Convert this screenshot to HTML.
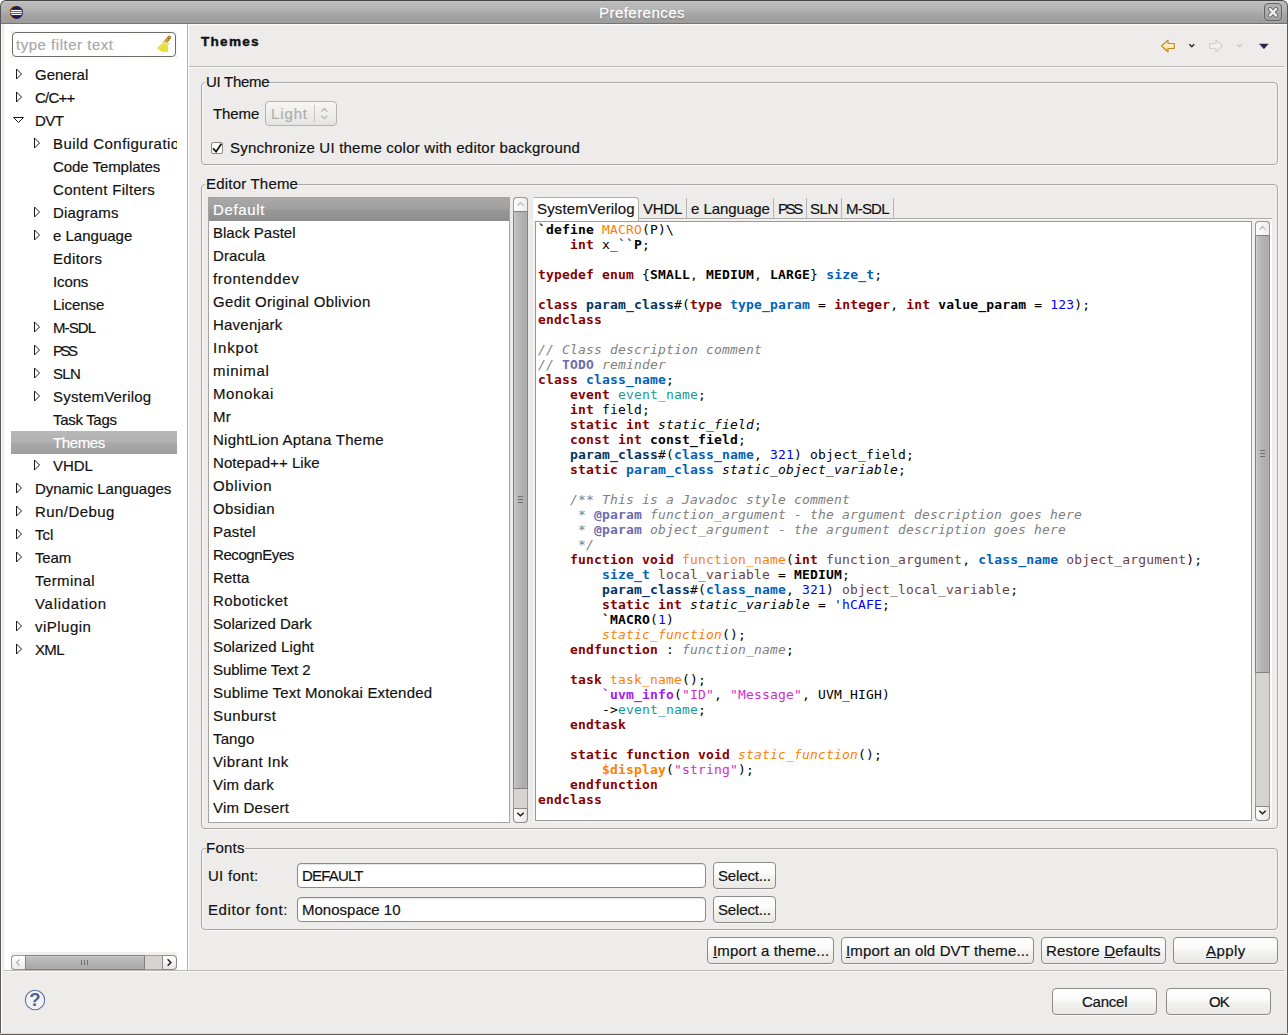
<!DOCTYPE html>
<html lang="en"><head><meta charset="utf-8"><title>Preferences</title>
<style>
*{box-sizing:border-box;margin:0;padding:0}
html,body{width:1288px;height:1035px;overflow:hidden;background:#edeceb}
body{position:relative;font-family:"Liberation Sans",sans-serif;font-size:15px;color:#111;-webkit-text-stroke:0.18px currentColor}
.a{position:absolute}
.t{position:absolute;white-space:pre}
#title{position:absolute;left:0;top:0;width:1288px;height:24px;border:1px solid #555;border-bottom-color:#747474;border-top-color:#444;border-radius:6px 6px 0 0;background:linear-gradient(#c6c6c6 0,#bababa 2px,#b4b4b4 8px,#a4a4a4 14px,#9c9c9c 100%)}
.sel{background:linear-gradient(#b8b8b8 0,#b2b2b2 45%,#a8a8a8 55%,#9e9e9e 100%)}
.self{background:linear-gradient(#a8a8a8 0,#a0a0a0 45%,#979797 55%,#8d8d8d 100%)}
.grp{position:absolute;border:1px solid #a9a7a4;border-radius:4px;box-shadow:inset 1px 1px 0 #f7f7f6,1px 1px 0 #f7f7f6}
.gl{position:absolute;background:#edeceb;height:4px}
.btn{position:absolute;border:1px solid #8d8b88;border-radius:4px;background:linear-gradient(#ffffff 0,#fbfbfb 40%,#f1f1f0 58%,#e9e8e7 100%);box-shadow:0 1px 0 #f6f6f5}
.inp{position:absolute;border:1px solid #8b8986;border-radius:4px;background:#fff;box-shadow:inset 0 1px 1px #e4e4e4}
u{text-decoration:underline;text-underline-offset:1px;text-decoration-thickness:1px}
#code{position:absolute;left:538px;top:222px;font-family:"DejaVu Sans Mono","Liberation Mono",monospace;font-size:13px;letter-spacing:0.174px;line-height:15px;color:#000;white-space:pre;-webkit-text-stroke:0}
#code div{height:15px}
.k{color:#860000;font-weight:bold}.b{font-weight:bold}.o{color:#ff8000}.oi{color:#ff8000;font-style:italic}.ob{color:#ff8000;font-weight:bold}
.tt{color:#0061ba;font-weight:bold}.n{color:#003366;font-weight:bold}.u{color:#0000ff}.c{color:#808080;font-style:italic}
.d{color:#6c6cae;font-weight:bold}.e{color:#149c9c}.i{font-style:italic}.l{color:#6a3e3e}.p{color:#a020f0;font-weight:bold}.s{color:#cd2ecd}
</style></head><body>
<div class="a" style="left:0px;top:0px;width:1288px;height:8px;background:#fff"></div>
<div class="a" style="left:0px;top:6px;width:1px;height:1029px;background:#5a5a5a"></div>
<div class="a" style="left:1287px;top:6px;width:1px;height:1029px;background:#5a5a5a"></div>
<div class="a" style="left:0px;top:1033px;width:1288px;height:1px;background:#d9d7d5"></div>
<div class="a" style="left:1px;top:24px;width:1px;height:1009px;background:#fbfbfb"></div>
<div class="a" style="left:0px;top:1034px;width:1288px;height:1px;background:#615d5a"></div>
<div id="title"></div>
<div class="t" style="left:599px;top:1px;height:24px;line-height:24px;letter-spacing:0.460px;color:#fff;-webkit-text-stroke:0.35px #fff;text-shadow:0 1px 1px #6a6a6a,0 0 1px #777;">Preferences</div>
<svg class="a" style="left:8px;top:4px" width="17" height="17" viewBox="0 0 17 17"><circle cx="7" cy="8.4" r="6.6" fill="#f7971d"/><circle cx="8.5" cy="8.4" r="6.5" fill="#241a55"/><rect x="2.3" y="5.6" width="12.3" height="5.6" fill="#4b4180"/><rect x="3.2" y="6" width="10.3" height="1.1" fill="#fff"/><rect x="2.3" y="7.9" width="11.8" height="1.1" fill="#fff"/><rect x="3.4" y="9.9" width="10.1" height="1.1" fill="#fff"/></svg>
<div class="a" style="left:1264px;top:3px;width:18px;height:18px;border:1px solid #626262;border-radius:4px;background:linear-gradient(#b4b4b4,#a3a3a3);box-shadow:0 0 0 1px rgba(255,255,255,.12)"></div>
<svg class="a" style="left:1264px;top:3px" width="18" height="18" viewBox="0 0 18 18"><path d="M6 6L12 12.6M12 6L6 12.6" stroke="#6e6e6e" stroke-width="4.2" stroke-linecap="round"/><path d="M6 6L12 12.6M12 6L6 12.6" stroke="#f4f4f4" stroke-width="2.3" stroke-linecap="round"/></svg>
<div class="a" style="left:4px;top:24px;width:183px;height:946px;background:#fff"></div>
<div class="a" style="left:187px;top:24px;width:1px;height:946px;background:#b4b2af"></div>
<div class="a" style="left:188px;top:24px;width:1px;height:946px;background:#fbfbfb"></div>
<div class="a" style="left:188px;top:24px;width:1099px;height:1px;background:#fbfbfb"></div>
<div class="a" style="left:11px;top:31px;width:166px;height:27px;background:#fafafa"></div>
<div class="a" style="left:11px;top:31px;width:2px;height:2px;background:#eeedec"></div>
<div class="a" style="left:175px;top:31px;width:2px;height:2px;background:#eeedec"></div>
<div class="a" style="left:11px;top:56px;width:2px;height:2px;background:#eeedec"></div>
<div class="a" style="left:175px;top:56px;width:2px;height:2px;background:#eeedec"></div>
<div class="a" style="left:12px;top:32px;width:164px;height:25px;border:1px solid #6f6a66;border-radius:4px;background:#fff"></div>
<div class="t" style="left:16px;top:33px;height:23px;line-height:23px;letter-spacing:0.520px;color:#a8a8a8;">type filter text</div>
<svg class="a" style="left:155px;top:35px" width="18" height="18" viewBox="0 0 18 18"><path d="M14.3 2.4L11.5 5.9" stroke="#b87a1c" stroke-width="3.6" stroke-linecap="round"/><path d="M14.2 2.6L11.8 5.6" stroke="#dba64e" stroke-width="1.6" stroke-linecap="round"/><circle cx="13.7" cy="3.4" r=".55" fill="#5e4416"/><path d="M8 5L9.6 6L13.4 8L14.8 7.9L13.6 9.8L7.4 7.4Z" fill="#eedf3c"/><path d="M7.6 7L13.3 9.6L12.9 10.7L7 8.2Z" fill="#ddcbe2"/><path d="M7.2 8L12.9 10.5C13.5 12.6 13.2 14.8 12.5 16.9C10.5 17.1 8.4 17 6.8 16.5C4.8 15.6 3 14.3 1.8 13C4 11.6 5.8 9.9 7.2 8Z" fill="#f0e040"/><path d="M3.2 13.4L7.6 9.6M5.4 15L9.4 10.6M8.2 16.4L11 11.4M11.4 16.6L12.2 12" stroke="#e0c818" stroke-width=".7" fill="none"/><path d="M4.2 14.2L8.6 10.2M9.8 16.4L11.6 11.8" stroke="#fbf27a" stroke-width=".7" fill="none"/></svg>
<div class="t" style="left:35px;top:63px;height:23px;line-height:23px;letter-spacing:-0.017px;">General</div>
<svg class="a" style="left:13px;top:66px" width="12" height="16" viewBox="0 0 12 16"><path d="M3.5 3L8.5 8L3.5 13Z" fill="#fff" stroke="#1a1a1a" stroke-width="1"/></svg>
<div class="t" style="left:35px;top:86px;height:23px;line-height:23px;letter-spacing:-0.800px;">C/C++</div>
<svg class="a" style="left:13px;top:89px" width="12" height="16" viewBox="0 0 12 16"><path d="M3.5 3L8.5 8L3.5 13Z" fill="#fff" stroke="#1a1a1a" stroke-width="1"/></svg>
<div class="t" style="left:35px;top:109px;height:23px;line-height:23px;letter-spacing:-0.500px;">DVT</div>
<svg class="a" style="left:11px;top:113px" width="16" height="14" viewBox="0 0 16 14"><path d="M2.5 4.5L12.5 4.5L7.5 9.5Z" fill="#fff" stroke="#1a1a1a" stroke-width="1"/></svg>
<div class="a" style="left:0;top:132px;width:177px;height:23px;overflow:hidden"><div class="t" style="left:53px;top:0px;height:23px;line-height:23px;letter-spacing:0.456px;">Build Configuration</div></div>
<svg class="a" style="left:31px;top:135px" width="12" height="16" viewBox="0 0 12 16"><path d="M3.5 3L8.5 8L3.5 13Z" fill="#fff" stroke="#1a1a1a" stroke-width="1"/></svg>
<div class="t" style="left:53px;top:155px;height:23px;line-height:23px;letter-spacing:-0.062px;">Code Templates</div>
<div class="t" style="left:53px;top:178px;height:23px;line-height:23px;letter-spacing:0.307px;">Content Filters</div>
<div class="t" style="left:53px;top:201px;height:23px;line-height:23px;letter-spacing:0.186px;">Diagrams</div>
<svg class="a" style="left:31px;top:204px" width="12" height="16" viewBox="0 0 12 16"><path d="M3.5 3L8.5 8L3.5 13Z" fill="#fff" stroke="#1a1a1a" stroke-width="1"/></svg>
<div class="t" style="left:53px;top:224px;height:23px;line-height:23px;letter-spacing:0.000px;">e Language</div>
<svg class="a" style="left:31px;top:227px" width="12" height="16" viewBox="0 0 12 16"><path d="M3.5 3L8.5 8L3.5 13Z" fill="#fff" stroke="#1a1a1a" stroke-width="1"/></svg>
<div class="t" style="left:53px;top:247px;height:23px;line-height:23px;letter-spacing:0.367px;">Editors</div>
<div class="t" style="left:53px;top:270px;height:23px;line-height:23px;letter-spacing:-0.125px;">Icons</div>
<div class="t" style="left:53px;top:293px;height:23px;line-height:23px;letter-spacing:-0.050px;">License</div>
<div class="t" style="left:53px;top:316px;height:23px;line-height:23px;letter-spacing:-0.925px;">M-SDL</div>
<svg class="a" style="left:31px;top:319px" width="12" height="16" viewBox="0 0 12 16"><path d="M3.5 3L8.5 8L3.5 13Z" fill="#fff" stroke="#1a1a1a" stroke-width="1"/></svg>
<div class="t" style="left:53px;top:339px;height:23px;line-height:23px;letter-spacing:-2.550px;">PSS</div>
<svg class="a" style="left:31px;top:342px" width="12" height="16" viewBox="0 0 12 16"><path d="M3.5 3L8.5 8L3.5 13Z" fill="#fff" stroke="#1a1a1a" stroke-width="1"/></svg>
<div class="t" style="left:53px;top:362px;height:23px;line-height:23px;letter-spacing:-0.650px;">SLN</div>
<svg class="a" style="left:31px;top:365px" width="12" height="16" viewBox="0 0 12 16"><path d="M3.5 3L8.5 8L3.5 13Z" fill="#fff" stroke="#1a1a1a" stroke-width="1"/></svg>
<div class="t" style="left:53px;top:385px;height:23px;line-height:23px;letter-spacing:0.192px;">SystemVerilog</div>
<svg class="a" style="left:31px;top:388px" width="12" height="16" viewBox="0 0 12 16"><path d="M3.5 3L8.5 8L3.5 13Z" fill="#fff" stroke="#1a1a1a" stroke-width="1"/></svg>
<div class="t" style="left:53px;top:408px;height:23px;line-height:23px;letter-spacing:-0.312px;">Task Tags</div>
<div class="a sel" style="left:11px;top:431px;width:166px;height:23px"></div>
<div class="t" style="left:53px;top:431px;height:23px;line-height:23px;letter-spacing:-0.400px;color:#fff;">Themes</div>
<div class="t" style="left:53px;top:454px;height:23px;line-height:23px;letter-spacing:-0.033px;">VHDL</div>
<svg class="a" style="left:31px;top:457px" width="12" height="16" viewBox="0 0 12 16"><path d="M3.5 3L8.5 8L3.5 13Z" fill="#fff" stroke="#1a1a1a" stroke-width="1"/></svg>
<div class="t" style="left:35px;top:477px;height:23px;line-height:23px;letter-spacing:-0.031px;">Dynamic Languages</div>
<svg class="a" style="left:13px;top:480px" width="12" height="16" viewBox="0 0 12 16"><path d="M3.5 3L8.5 8L3.5 13Z" fill="#fff" stroke="#1a1a1a" stroke-width="1"/></svg>
<div class="t" style="left:35px;top:500px;height:23px;line-height:23px;letter-spacing:0.425px;">Run/Debug</div>
<svg class="a" style="left:13px;top:503px" width="12" height="16" viewBox="0 0 12 16"><path d="M3.5 3L8.5 8L3.5 13Z" fill="#fff" stroke="#1a1a1a" stroke-width="1"/></svg>
<div class="t" style="left:35px;top:523px;height:23px;line-height:23px;letter-spacing:-0.050px;">Tcl</div>
<svg class="a" style="left:13px;top:526px" width="12" height="16" viewBox="0 0 12 16"><path d="M3.5 3L8.5 8L3.5 13Z" fill="#fff" stroke="#1a1a1a" stroke-width="1"/></svg>
<div class="t" style="left:35px;top:546px;height:23px;line-height:23px;letter-spacing:-0.133px;">Team</div>
<svg class="a" style="left:13px;top:549px" width="12" height="16" viewBox="0 0 12 16"><path d="M3.5 3L8.5 8L3.5 13Z" fill="#fff" stroke="#1a1a1a" stroke-width="1"/></svg>
<div class="t" style="left:35px;top:569px;height:23px;line-height:23px;letter-spacing:0.414px;">Terminal</div>
<div class="t" style="left:35px;top:592px;height:23px;line-height:23px;letter-spacing:0.711px;">Validation</div>
<div class="t" style="left:35px;top:615px;height:23px;line-height:23px;letter-spacing:0.486px;">viPlugin</div>
<svg class="a" style="left:13px;top:618px" width="12" height="16" viewBox="0 0 12 16"><path d="M3.5 3L8.5 8L3.5 13Z" fill="#fff" stroke="#1a1a1a" stroke-width="1"/></svg>
<div class="t" style="left:35px;top:638px;height:23px;line-height:23px;letter-spacing:-0.650px;">XML</div>
<svg class="a" style="left:13px;top:641px" width="12" height="16" viewBox="0 0 12 16"><path d="M3.5 3L8.5 8L3.5 13Z" fill="#fff" stroke="#1a1a1a" stroke-width="1"/></svg>
<div class="a" style="left:11px;top:952px;width:166px;height:18px;background:#f1f0ef"></div>
<div class="a" style="left:11px;top:955px;width:166px;height:15px;border:1px solid #a19d99;border-radius:4px;background:#d5d4d3"></div>
<div class="a" style="left:25px;top:955px;width:120px;height:15px;border:1px solid #818181;background:linear-gradient(#c2c2c2,#b4b4b4 50%,#a8a8a8);box-shadow:inset 0 1px 0 rgba(255,255,255,.22)"></div>
<div class="a" style="left:11px;top:955px;width:15px;height:15px;border:1px solid #9a9794;border-right-color:#818181;border-radius:4px 0 0 4px;background:linear-gradient(#ffffff,#ececec)"></div>
<div class="a" style="left:162px;top:955px;width:15px;height:15px;border:1px solid #8c8a88;border-radius:0 4px 4px 0;background:linear-gradient(#ffffff,#e6e6e6)"></div>
<svg class="a" style="left:11px;top:955px" width="166" height="15" viewBox="0 0 166 15"><path d="M8.6 4.5L5.6 7.5L8.6 10.5" fill="none" stroke="#b4b4b4" stroke-width="1.2"/><path d="M156.6 4.3L159.8 7.5L156.6 10.7" fill="none" stroke="#1a1a1a" stroke-width="1.4"/><path d="M70.5 5V10M73.5 5V10M76.5 5V10" stroke="#6e6e6e" stroke-width="1"/></svg>
<div class="t" style="left:201px;top:30px;height:24px;line-height:24px;letter-spacing:1.240px;font-weight:bold;font-size:13.6px;-webkit-text-stroke:0.4px #111;">Themes</div>
<svg class="a" style="left:1156px;top:35px" width="120" height="22" viewBox="0 0 120 22"><defs><linearGradient id="ga" x1="0" y1="0" x2="0" y2="1"><stop offset="0" stop-color="#fffdf2"/><stop offset="1" stop-color="#f9dc8c"/></linearGradient></defs><path d="M5.5 11L12 5.2V8.5H18.3V13.5H12V16.8Z" fill="url(#ga)" stroke="#c98a1a" stroke-width="1.2" stroke-linejoin="round"/><path d="M33.4 9.3L35.8 11.7L38.2 9.3" fill="none" stroke="#2a2a2a" stroke-width="1.5"/><path d="M66.5 11L60 5.2V8.5H53.7V13.5H60V16.8Z" fill="#f0efee" stroke="#d2d0ce" stroke-width="1.1" stroke-linejoin="round"/><path d="M81.3 9.3L83.7 11.7L86.1 9.3" fill="none" stroke="#c2c0be" stroke-width="1.2"/><path d="M103.3 8.7H112.7L108 13.9Z" fill="#2b2140"/><path d="M103.3 8.7L108 13.9" stroke="#5a3fa0" stroke-width=".8"/></svg>
<div class="a" style="left:189px;top:66px;width:1095px;height:1px;background:#b9b7b4"></div>
<div class="a" style="left:189px;top:67px;width:1095px;height:1px;background:#fafaf9"></div>
<div class="grp" style="left:201px;top:82px;width:1077px;height:83px"></div>
<div class="a" style="left:205px;top:81px;width:64px;height:4px;background:#edeceb"></div>
<div class="t" style="left:206px;top:70px;height:23px;line-height:23px;letter-spacing:-0.271px;">UI Theme</div>
<div class="t" style="left:213px;top:102px;height:23px;line-height:23px;letter-spacing:-0.075px;">Theme</div>
<div class="a" style="left:265px;top:101px;width:72px;height:25px;border:1px solid #b5b3b0;border-radius:4px;background:linear-gradient(#f6f6f5,#eeeeed 50%,#e4e3e2)"></div>
<div class="t" style="left:271px;top:102px;height:23px;line-height:23px;letter-spacing:0.875px;color:#b0aeac;">Light</div>
<svg class="a" style="left:312px;top:103px" width="24" height="22" viewBox="0 0 24 22"><path d="M2.5 2V19" stroke="#c9c7c4"/><path d="M9.3 8.6L12.3 5.6L15.3 8.6M9.3 12.6L12.3 15.6L15.3 12.6" fill="none" stroke="#b0aeab" stroke-width="1.1"/></svg>
<div class="a" style="left:211px;top:142px;width:12px;height:12px;border:1px solid #8a8885;border-radius:2px;background:#fff"></div>
<svg class="a" style="left:211px;top:141px" width="14" height="14" viewBox="0 0 14 14"><path d="M2 7.3L5.1 10.6L10.4 2.7" fill="none" stroke="#111" stroke-width="1.7"/></svg>
<div class="t" style="left:230px;top:136px;height:23px;line-height:23px;letter-spacing:0.219px;">Synchronize UI theme color with editor background</div>
<div class="grp" style="left:201px;top:184px;width:1077px;height:645px"></div>
<div class="a" style="left:205px;top:183px;width:93px;height:4px;background:#edeceb"></div>
<div class="t" style="left:206px;top:172px;height:23px;line-height:23px;letter-spacing:0.200px;">Editor Theme</div>
<div class="a" style="left:208px;top:197px;width:302px;height:626px;border:1px solid #a5a3a0;background:#fff"></div>
<div class="a self" style="left:209px;top:198px;width:300px;height:23px"></div>
<div class="t" style="left:213px;top:198px;height:23px;line-height:23px;letter-spacing:0.650px;color:#fff;">Default</div>
<div class="t" style="left:213px;top:221px;height:23px;line-height:23px;letter-spacing:0.000px;">Black Pastel</div>
<div class="t" style="left:213px;top:244px;height:23px;line-height:23px;letter-spacing:0.083px;">Dracula</div>
<div class="t" style="left:213px;top:267px;height:23px;line-height:23px;letter-spacing:0.640px;">frontenddev</div>
<div class="t" style="left:213px;top:290px;height:23px;line-height:23px;letter-spacing:0.327px;">Gedit Original Oblivion</div>
<div class="t" style="left:213px;top:313px;height:23px;line-height:23px;letter-spacing:0.225px;">Havenjark</div>
<div class="t" style="left:213px;top:336px;height:23px;line-height:23px;letter-spacing:0.820px;">Inkpot</div>
<div class="t" style="left:213px;top:359px;height:23px;line-height:23px;letter-spacing:0.700px;">minimal</div>
<div class="t" style="left:213px;top:382px;height:23px;line-height:23px;letter-spacing:0.617px;">Monokai</div>
<div class="t" style="left:213px;top:405px;height:23px;line-height:23px;letter-spacing:0.300px;">Mr</div>
<div class="t" style="left:213px;top:428px;height:23px;line-height:23px;letter-spacing:0.271px;">NightLion Aptana Theme</div>
<div class="t" style="left:213px;top:451px;height:23px;line-height:23px;letter-spacing:0.054px;">Notepad++ Like</div>
<div class="t" style="left:213px;top:474px;height:23px;line-height:23px;letter-spacing:0.614px;">Oblivion</div>
<div class="t" style="left:213px;top:497px;height:23px;line-height:23px;letter-spacing:0.343px;">Obsidian</div>
<div class="t" style="left:213px;top:520px;height:23px;line-height:23px;letter-spacing:0.200px;">Pastel</div>
<div class="t" style="left:213px;top:543px;height:23px;line-height:23px;letter-spacing:-0.411px;">RecognEyes</div>
<div class="t" style="left:213px;top:566px;height:23px;line-height:23px;letter-spacing:0.100px;">Retta</div>
<div class="t" style="left:213px;top:589px;height:23px;line-height:23px;letter-spacing:0.411px;">Roboticket</div>
<div class="t" style="left:213px;top:612px;height:23px;line-height:23px;letter-spacing:0.023px;">Solarized Dark</div>
<div class="t" style="left:213px;top:635px;height:23px;line-height:23px;letter-spacing:0.129px;">Solarized Light</div>
<div class="t" style="left:213px;top:658px;height:23px;line-height:23px;letter-spacing:-0.031px;">Sublime Text 2</div>
<div class="t" style="left:213px;top:681px;height:23px;line-height:23px;letter-spacing:0.179px;">Sublime Text Monokai Extended</div>
<div class="t" style="left:213px;top:704px;height:23px;line-height:23px;letter-spacing:0.400px;">Sunburst</div>
<div class="t" style="left:213px;top:727px;height:23px;line-height:23px;letter-spacing:0.125px;">Tango</div>
<div class="t" style="left:213px;top:750px;height:23px;line-height:23px;letter-spacing:0.390px;">Vibrant Ink</div>
<div class="t" style="left:213px;top:773px;height:23px;line-height:23px;letter-spacing:0.257px;">Vim dark</div>
<div class="t" style="left:213px;top:796px;height:23px;line-height:23px;letter-spacing:0.211px;">Vim Desert</div>
<div class="a" style="left:513px;top:197px;width:15px;height:626px;border:1px solid #a19d99;border-radius:4px;background:#d5d4d3"></div>
<div class="a" style="left:513px;top:211px;width:15px;height:578px;border:1px solid #818181;background:linear-gradient(90deg,#c2c2c2,#b4b4b4 50%,#a8a8a8);box-shadow:inset 1px 0 0 rgba(255,255,255,.22),inset -1px 0 0 rgba(255,255,255,.12)"></div>
<div class="a" style="left:513px;top:197px;width:15px;height:15px;border:1px solid #9a9794;border-bottom-color:#818181;border-radius:4px 4px 0 0;background:linear-gradient(90deg,#ffffff,#ececec)"></div>
<div class="a" style="left:513px;top:808px;width:15px;height:15px;border:1px solid #8c8a88;border-radius:0 0 4px 4px;background:linear-gradient(90deg,#ffffff,#e6e6e6)"></div>
<svg class="a" style="left:513px;top:197px" width="15" height="626" viewBox="0 0 15 626"><path d="M4.5 8.6L7.5 5.6L10.5 8.6" fill="none" stroke="#b4b4b4" stroke-width="1.2"/><path d="M4.3 615.7L7.5 618.8L10.7 615.7" fill="none" stroke="#1a1a1a" stroke-width="1.4"/><path d="M5 299.5H10M5 302.5H10M5 305.5H10" stroke="#6e6e6e" stroke-width="1"/></svg>
<div class="a" style="left:533px;top:219px;width:739px;height:604px;background:#f2f1f0"></div>
<div class="a" style="left:1270px;top:219px;width:2px;height:604px;background:#fdfdfd"></div>
<div class="a" style="left:533px;top:218px;width:739px;height:1px;background:#b0aeab"></div>
<div class="a" style="left:533px;top:197px;width:106px;height:24px;border:1px solid #b0aeab;border-bottom:none;border-left-color:#fbfbfb;border-radius:0 4px 0 0;background:#fff"></div>
<div class="t" style="left:537px;top:197px;height:23px;line-height:23px;letter-spacing:0.142px;">SystemVerilog</div>
<div class="t" style="left:643px;top:197px;height:23px;line-height:23px;letter-spacing:-0.200px;">VHDL</div>
<div class="a" style="left:686px;top:198px;width:1px;height:20px;background:#b5b3b0"></div>
<div class="t" style="left:691px;top:197px;height:23px;line-height:23px;letter-spacing:-0.044px;">e Language</div>
<div class="a" style="left:773px;top:198px;width:1px;height:20px;background:#b5b3b0"></div>
<div class="t" style="left:778px;top:197px;height:23px;line-height:23px;letter-spacing:-2.400px;">PSS</div>
<div class="a" style="left:806px;top:198px;width:1px;height:20px;background:#b5b3b0"></div>
<div class="t" style="left:810px;top:197px;height:23px;line-height:23px;letter-spacing:-0.450px;">SLN</div>
<div class="a" style="left:841px;top:198px;width:1px;height:20px;background:#b5b3b0"></div>
<div class="t" style="left:846px;top:197px;height:23px;line-height:23px;letter-spacing:-0.800px;">M-SDL</div>
<div class="a" style="left:893px;top:198px;width:1px;height:20px;background:#b5b3b0"></div>
<div class="a" style="left:535px;top:221px;width:717px;height:600px;border:1px solid #999;background:#fff"></div>
<div id="code"><div><span class="b">`define</span> <span class="o">MACRO</span>(P)\</div><div>    <span class="k">int</span> x_``<span class="b">P</span>;</div><div></div><div><span class="k">typedef enum</span> {<span class="b">SMALL</span>, <span class="b">MEDIUM</span>, <span class="b">LARGE</span>} <span class="tt">size_t</span>;</div><div></div><div><span class="k">class</span> <span class="n">param_class</span>#(<span class="k">type</span> <span class="tt">type_param</span> = <span class="k">integer</span>, <span class="k">int</span> <span class="b">value_param</span> = <span class="u">123</span>);</div><div><span class="k">endclass</span></div><div></div><div><span class="c">// Class description comment</span></div><div><span class="c">// </span><span class="d">TODO</span><span class="c"> reminder</span></div><div><span class="k">class</span> <span class="tt">class_name</span>;</div><div>    <span class="k">event</span> <span class="e">event_name</span>;</div><div>    <span class="k">int</span> field;</div><div>    <span class="k">static int</span> <span class="i">static_field</span>;</div><div>    <span class="k">const int</span> <span class="b">const_field</span>;</div><div>    <span class="n">param_class</span>#(<span class="tt">class_name</span>, <span class="u">321</span>) object_field;</div><div>    <span class="k">static</span> <span class="tt">param_class</span> <span class="i">static_object_variable</span>;</div><div></div><div>    <span class="c">/** This is a Javadoc style comment</span></div><div>    <span class="c"> * </span><span class="d">@param</span><span class="c"> function_argument - the argument description goes here</span></div><div>    <span class="c"> * </span><span class="d">@param</span><span class="c"> object_argument - the argument description goes here</span></div><div>    <span class="c"> */</span></div><div>    <span class="k">function void</span> <span class="o">function_name</span>(<span class="k">int</span> <span class="l">function_argument</span>, <span class="tt">class_name</span> <span class="l">object_argument</span>);</div><div>        <span class="tt">size_t</span> <span class="l">local_variable</span> = <span class="b">MEDIUM</span>;</div><div>        <span class="n">param_class</span>#(<span class="tt">class_name</span>, <span class="u">321</span>) <span class="l">object_local_variable</span>;</div><div>        <span class="k">static int</span> <span class="i">static_variable</span> = <span class="u">'hCAFE</span>;</div><div>        <span class="b">`MACRO</span>(<span class="u">1</span>)</div><div>        <span class="oi">static_function</span>();</div><div>    <span class="k">endfunction</span> : <span class="c">function_name</span>;</div><div></div><div>    <span class="k">task</span> <span class="o">task_name</span>();</div><div>        <span class="p">`uvm_info</span>(<span class="s">"ID"</span>, <span class="s">"Message"</span>, UVM_HIGH)</div><div>        -&gt;<span class="e">event_name</span>;</div><div>    <span class="k">endtask</span></div><div></div><div>    <span class="k">static function void</span> <span class="oi">static_function</span>();</div><div>        <span class="ob">$display</span>(<span class="s">"string"</span>);</div><div>    <span class="k">endfunction</span></div><div><span class="k">endclass</span></div></div>
<div class="a" style="left:1255px;top:221px;width:15px;height:600px;border:1px solid #a19d99;border-radius:4px;background:#d5d4d3"></div>
<div class="a" style="left:1255px;top:235px;width:15px;height:438px;border:1px solid #818181;background:linear-gradient(90deg,#c2c2c2,#b4b4b4 50%,#a8a8a8);box-shadow:inset 1px 0 0 rgba(255,255,255,.22),inset -1px 0 0 rgba(255,255,255,.12)"></div>
<div class="a" style="left:1255px;top:221px;width:15px;height:15px;border:1px solid #9a9794;border-bottom-color:#818181;border-radius:4px 4px 0 0;background:linear-gradient(90deg,#ffffff,#ececec)"></div>
<div class="a" style="left:1255px;top:806px;width:15px;height:15px;border:1px solid #8c8a88;border-radius:0 0 4px 4px;background:linear-gradient(90deg,#ffffff,#e6e6e6)"></div>
<svg class="a" style="left:1255px;top:221px" width="15" height="600" viewBox="0 0 15 600"><path d="M4.5 8.6L7.5 5.6L10.5 8.6" fill="none" stroke="#b4b4b4" stroke-width="1.2"/><path d="M4.3 589.7L7.5 592.8L10.7 589.7" fill="none" stroke="#1a1a1a" stroke-width="1.4"/><path d="M5 229.5H10M5 232.5H10M5 235.5H10" stroke="#6e6e6e" stroke-width="1"/></svg>
<div class="grp" style="left:201px;top:848px;width:1077px;height:82px"></div>
<div class="a" style="left:206px;top:847px;width:39px;height:4px;background:#edeceb"></div>
<div class="t" style="left:206px;top:836px;height:23px;line-height:23px;letter-spacing:0.250px;">Fonts</div>
<div class="t" style="left:208px;top:864px;height:23px;line-height:23px;letter-spacing:0.271px;">UI font:</div>
<div class="inp" style="left:297px;top:863px;width:409px;height:25px"></div>
<div class="t" style="left:302px;top:864px;height:23px;line-height:23px;letter-spacing:-0.817px;">DEFAULT</div>
<div class="btn" style="left:713px;top:862px;width:63px;height:27px"></div>
<div class="t" style="left:718px;top:864px;height:23px;line-height:23px;letter-spacing:-0.150px;">Select...</div>
<div class="t" style="left:208px;top:898px;height:23px;line-height:23px;letter-spacing:0.618px;">Editor font:</div>
<div class="inp" style="left:297px;top:897px;width:409px;height:25px"></div>
<div class="t" style="left:302px;top:898px;height:23px;line-height:23px;letter-spacing:0.009px;">Monospace 10</div>
<div class="btn" style="left:713px;top:896px;width:63px;height:27px"></div>
<div class="t" style="left:718px;top:898px;height:23px;line-height:23px;letter-spacing:-0.150px;">Select...</div>
<div class="btn" style="left:707px;top:937px;width:127px;height:27px"></div>
<div class="t" style="left:713px;top:939px;height:23px;line-height:23px;letter-spacing:0.175px;"><u>I</u>mport a theme...</div>
<div class="btn" style="left:841px;top:937px;width:193px;height:27px"></div>
<div class="t" style="left:846px;top:939px;height:23px;line-height:23px;letter-spacing:0.136px;"><u>I</u>mport an old DVT theme...</div>
<div class="btn" style="left:1041px;top:937px;width:125px;height:27px"></div>
<div class="t" style="left:1046px;top:939px;height:23px;line-height:23px;letter-spacing:0.187px;">Restore <u>D</u>efaults</div>
<div class="btn" style="left:1173px;top:937px;width:105px;height:27px"></div>
<div class="t" style="left:1206px;top:939px;height:23px;line-height:23px;letter-spacing:0.450px;"><u>A</u>pply</div>
<div class="a" style="left:4px;top:970px;width:1280px;height:1px;background:#b9b7b4"></div>
<div class="a" style="left:4px;top:971px;width:1280px;height:1px;background:#fafaf9"></div>
<svg class="a" style="left:22px;top:987px" width="26" height="26" viewBox="0 0 26 26"><circle cx="13" cy="13" r="9.7" fill="#f3f3f5" stroke="#5d7099" stroke-width="1.1"/><text x="13" y="19.4" text-anchor="middle" font-family="Liberation Sans,sans-serif" font-weight="bold" font-size="18.5" fill="#4f6392" stroke="none" style="-webkit-text-stroke:0">?</text></svg>
<div class="btn" style="left:1052px;top:988px;width:105px;height:27px"></div>
<div class="t" style="left:1082px;top:990px;height:23px;line-height:23px;letter-spacing:-0.240px;">Cancel</div>
<div class="btn" style="left:1166px;top:988px;width:105px;height:27px"></div>
<div class="t" style="left:1209px;top:990px;height:23px;line-height:23px;letter-spacing:-1.000px;">OK</div>
</body></html>
